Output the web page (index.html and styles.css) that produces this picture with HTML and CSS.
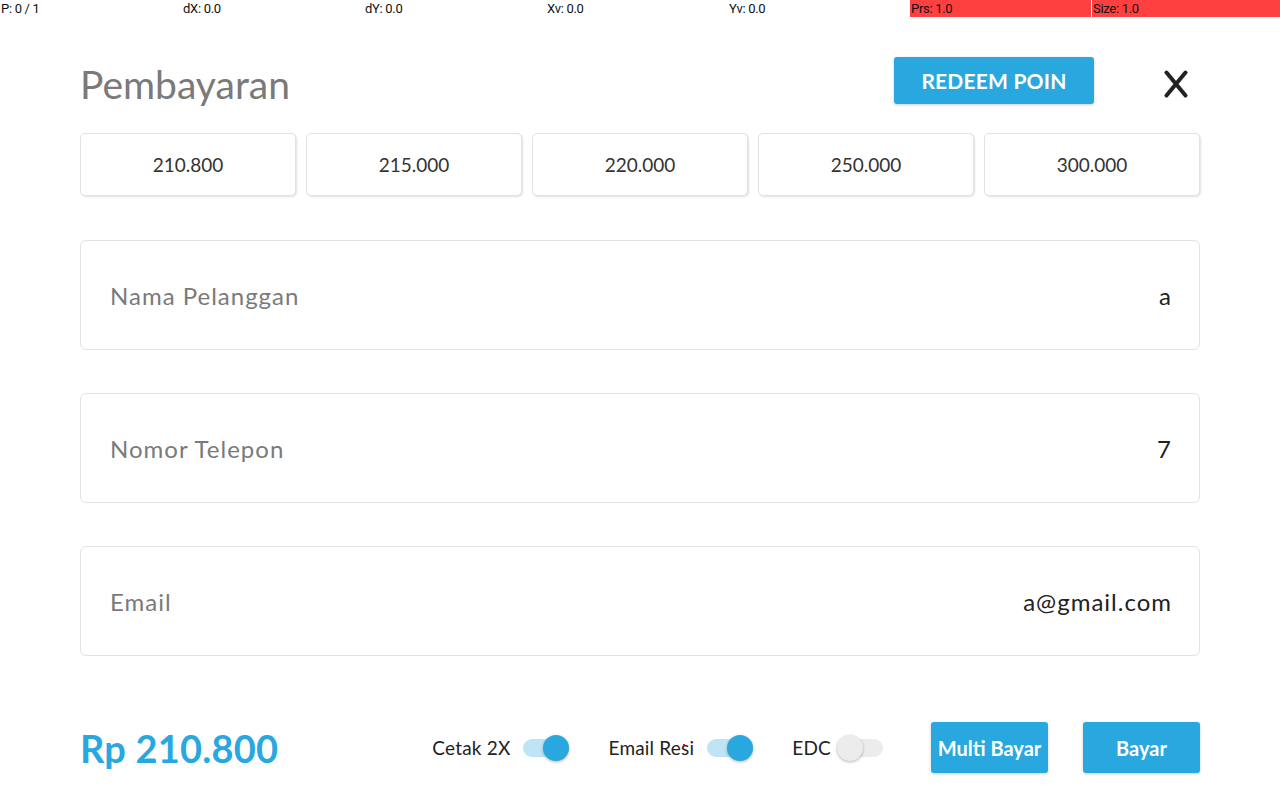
FILE: index.html
```html
<!DOCTYPE html>
<html lang="id">
<head>
<meta charset="utf-8">
<title>Pembayaran</title>
<link rel="stylesheet" href="styles.css">
</head>
<body>
<div class="debug">
  <span class="cell">P: 0 / 1</span>
  <span class="cell">dX: 0.0</span>
  <span class="cell">dY: 0.0</span>
  <span class="cell">Xv: 0.0</span>
  <span class="cell">Yv: 0.0</span>
  <span class="cell red">Prs: 1.0</span>
  <span class="cell red">Size: 1.0</span>
</div>
<main class="page">
  <header class="head">
    <h1 class="title">Pembayaran</h1>
    <button class="btn redeem">REDEEM POIN</button>
    <button class="close" aria-label="Tutup">
      <svg width="24" height="28" viewBox="0 0 24 28"><path d="M2.5 2.5 L21.5 25.5 M21.5 2.5 L2.5 25.5" stroke="#222" stroke-width="4" stroke-linecap="round" fill="none"/></svg>
    </button>
  </header>
  <div class="amounts">
    <button class="amount">210.800</button>
    <button class="amount">215.000</button>
    <button class="amount">220.000</button>
    <button class="amount">250.000</button>
    <button class="amount">300.000</button>
  </div>
  <div class="fields">
    <label class="field"><span class="label">Nama Pelanggan</span><span class="value">a</span></label>
    <label class="field"><span class="label">Nomor Telepon</span><span class="value">7</span></label>
    <label class="field"><span class="label">Email</span><span class="value">a@gmail.com</span></label>
  </div>
  <footer class="foot">
    <div class="total">Rp 210.800</div>
    <div class="toggles">
      <div class="opt"><span>Cetak 2X</span><span class="switch on"><span class="thumb"></span></span></div>
      <div class="opt"><span>Email Resi</span><span class="switch on"><span class="thumb"></span></span></div>
      <div class="opt"><span>EDC</span><span class="switch off"><span class="thumb"></span></span></div>
    </div>
    <div class="actions">
      <button class="btn act">Multi Bayar</button>
      <button class="btn act">Bayar</button>
    </div>
  </footer>
  <span class="dot"></span>
</main>
</body>
</html>
```
FILE: styles.css
```css
* { box-sizing: border-box; }
html, body { margin: 0; padding: 0; background: #fff; }
body {
  width: 1280px;
  height: 800px;
  overflow: hidden;
  font-family: Lato, "Open Sans", sans-serif;
  color: #222;
}
.debug {
  display: grid;
  grid-template-columns: repeat(6, 182px) 1fr;
  height: 17px;
  font-family: Roboto, sans-serif;
  font-size: 13px;
  line-height: 17px;
  color: #111;
  letter-spacing: -0.3px;
}
.cell { padding-left: 1px; }
.cell.red { background: #ff4040; border-right: 1px solid #fff; }
.cell.red:last-child { border-right: 0; }

.page {
  position: relative;
  padding: 40px 80px 0;
}
.head {
  display: flex;
  align-items: center;
  height: 47px;
}
.title {
  margin: 0 auto 0 0;
  font-weight: 400;
  font-size: 39px;
  color: #7a7a7a;
  position: relative;
  top: 3px;
}
.btn {
  border: 0;
  border-radius: 3px;
  background: #29a8df;
  color: #fff;
  font-family: inherit;
  font-weight: 700;
  cursor: pointer;
  box-shadow: 0 1px 3px rgba(0,0,0,0.2);
}
.redeem {
  width: 200px;
  height: 47px;
  font-size: 21px;
  letter-spacing: 0.2px;
}
.close {
  border: 0;
  background: none;
  padding: 0;
  margin: 6px 12px 0 70px;
  width: 24px;
  height: 28px;
  display: flex;
}
.amounts {
  display: flex;
  gap: 10px;
  margin-top: 29px;
}
.amount {
  flex: 1;
  height: 63px;
  background: #fff;
  border: 1px solid #e2e2e2;
  border-radius: 5px;
  box-shadow: 1px 1px 2px rgba(0,0,0,0.12);
  font-family: inherit;
  font-size: 19px;
  color: #333;
}
.fields {
  display: flex;
  flex-direction: column;
  gap: 43px;
  margin-top: 44px;
}
.field {
  display: flex;
  align-items: center;
  justify-content: space-between;
  height: 110px;
  padding: 0 28px 0 29px;
  border: 1px solid #e3e3e3;
  border-radius: 6px;
  font-size: 24px;
  letter-spacing: 1px;
}
.label { color: #7a7a7a; }
.value { color: #222; margin-right: -1px; }
.foot {
  display: flex;
  align-items: center;
  margin-top: 66px;
  height: 51px;
}
.total {
  font-size: 38px;
  font-weight: 700;
  color: #29a8df;
  letter-spacing: 0.2px;
  margin-right: auto;
}
.toggles {
  display: flex;
  align-items: center;
  gap: 39px;
}
.opt {
  display: flex;
  align-items: center;
  gap: 13px;
  font-size: 19px;
  letter-spacing: 0.2px;
  color: #222;
}
.opt:last-child { gap: 6px; }
.switch {
  position: relative;
  width: 46px;
  height: 18px;
  border-radius: 9px;
  background: #bfe4f6;
}
.switch.off { background: #ececec; }
.thumb {
  position: absolute;
  top: -4px;
  width: 26px;
  height: 26px;
  border-radius: 50%;
  background: #29a8df;
  box-shadow: 0 1px 3px rgba(0,0,0,0.3);
}
.switch.on .thumb { right: 0; }
.switch.off .thumb { left: 0; background: #ececec; }
.actions {
  display: flex;
  gap: 35px;
  margin-left: 48px;
}
.act {
  width: 117px;
  height: 51px;
  font-size: 20px;
  padding: 0;
}
.dot {
  position: absolute;
  left: 683px;
  top: 727px;
  width: 2px;
  height: 2px;
  background: #f00;
}
```
